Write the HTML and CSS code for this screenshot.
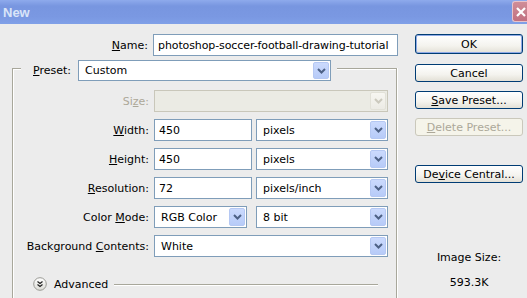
FILE: index.html
```html
<!DOCTYPE html>
<html lang="en">
<head>
  <meta charset="UTF-8" />
  <title>New</title>
  <link rel="stylesheet" href="styles.css">
</head>
<body>
  <div class="window">

    <!-- title bar -->
    <div class="titlebar">
      <span class="title">New</span>
      <span class="close">
        <svg width="10" height="10" viewBox="0 0 10 10"><path d="M1 1 L9 9 M9 1 L1 9" stroke="#fff" stroke-width="2.2" fill="none"/></svg>
      </span>
    </div>

    <div class="dialog">
      <div class="main">
        <div class="name-row">
          <span class="lbl name-lbl"><u>N</u>ame:</span>
          <div class="field name-field">photoshop-soccer-football-drawing-tutorial</div>
        </div>

        <!-- preset group -->
        <div class="group-head">
          <span class="edge-l"></span>
          <span class="head-lbl"><u>P</u>reset:</span>
          <div class="select preset">
            <span class="val">Custom</span>
            <span class="arrow"><svg width="9" height="6" viewBox="0 0 9 6"><path d="M1 1 L4.5 4.5 L8 1" stroke="#4d6185" stroke-width="2" fill="none"/></svg></span>
          </div>
          <span class="edge-r"></span>
        </div>

        <div class="group-body">
          <div class="form-grid">
            <span class="lbl off">Si<u>z</u>e:</span>
            <div class="select off">
              <span class="val"></span>
              <span class="arrow"><svg width="9" height="6" viewBox="0 0 9 6"><path d="M1 1 L4.5 4.5 L8 1" stroke="#cbc9bd" stroke-width="2" fill="none"/></svg></span>
            </div>

            <span class="lbl"><u>W</u>idth:</span>
            <div class="pair">
              <div class="field num">450</div>
              <div class="select unit">
                <span class="val">pixels</span>
                <span class="arrow"><svg width="9" height="6" viewBox="0 0 9 6"><path d="M1 1 L4.5 4.5 L8 1" stroke="#4d6185" stroke-width="2" fill="none"/></svg></span>
              </div>
            </div>

            <span class="lbl"><u>H</u>eight:</span>
            <div class="pair">
              <div class="field num">450</div>
              <div class="select unit">
                <span class="val">pixels</span>
                <span class="arrow"><svg width="9" height="6" viewBox="0 0 9 6"><path d="M1 1 L4.5 4.5 L8 1" stroke="#4d6185" stroke-width="2" fill="none"/></svg></span>
              </div>
            </div>

            <span class="lbl"><u>R</u>esolution:</span>
            <div class="pair">
              <div class="field num">72</div>
              <div class="select unit">
                <span class="val">pixels/inch</span>
                <span class="arrow"><svg width="9" height="6" viewBox="0 0 9 6"><path d="M1 1 L4.5 4.5 L8 1" stroke="#4d6185" stroke-width="2" fill="none"/></svg></span>
              </div>
            </div>

            <span class="lbl">Color <u>M</u>ode:</span>
            <div class="pair">
              <div class="select mode">
                <span class="val">RGB Color</span>
                <span class="arrow"><svg width="9" height="6" viewBox="0 0 9 6"><path d="M1 1 L4.5 4.5 L8 1" stroke="#4d6185" stroke-width="2" fill="none"/></svg></span>
              </div>
              <div class="select unit">
                <span class="val">8 bit</span>
                <span class="arrow"><svg width="9" height="6" viewBox="0 0 9 6"><path d="M1 1 L4.5 4.5 L8 1" stroke="#4d6185" stroke-width="2" fill="none"/></svg></span>
              </div>
            </div>

            <span class="lbl">Background <u>C</u>ontents:</span>
            <div class="select">
              <span class="val">White</span>
              <span class="arrow"><svg width="9" height="6" viewBox="0 0 9 6"><path d="M1 1 L4.5 4.5 L8 1" stroke="#4d6185" stroke-width="2" fill="none"/></svg></span>
            </div>
          </div>

          <div class="advanced">
            <svg class="adv-icon" width="14" height="14" viewBox="0 0 14 14">
              <defs>
                <linearGradient id="advg" x1="0" y1="0" x2="0" y2="1">
                  <stop offset="0" stop-color="#ffffff"/>
                  <stop offset="1" stop-color="#dcdcd6"/>
                </linearGradient>
              </defs>
              <circle cx="7" cy="7" r="6.3" fill="url(#advg)" stroke="#9a9a94" stroke-width="1"/>
              <path d="M4.5 4.5 L7 6.5 L9.5 4.5 M4.5 7.5 L7 9.5 L9.5 7.5" stroke="#222" stroke-width="1.2" fill="none"/>
            </svg>
            <span class="adv-text">Advanced</span>
            <span class="adv-line"></span>
          </div>
        </div>
      </div>

      <!-- buttons -->
      <div class="side">
        <div class="btn default">OK</div>
        <div class="btn">Cancel</div>
        <div class="btn"><u>S</u>ave Preset...</div>
        <div class="btn disabled"><u>D</u>elete Preset...</div>
        <div class="btn far">De<u>v</u>ice Central...</div>
        <div class="size-label">Image Size:</div>
        <div class="size-value">593.3K</div>
      </div>
    </div>
  </div>
</body>
</html>
```

FILE: styles.css
```css
* {
  box-sizing: border-box;
}

html, body {
  margin: 0;
  padding: 0;
  overflow: hidden;
  background: #ececec;
}

body {
  font-family: "DejaVu Sans", Tahoma, sans-serif;
  font-size: 11px;
  color: #000;
}

u {
  text-decoration: underline;
  text-underline-offset: 1px;
}

.window {
  width: 527px;
  height: 298px;
  display: flex;
  flex-direction: column;
}

/* title bar */
.titlebar {
  height: 24px;
  flex: none;
  display: flex;
  justify-content: space-between;
  align-items: center;
  background: linear-gradient(#8eaaec, #7896e0 25%, #7a98e2 70%, #80a0e8);
}

.title {
  font: bold 13px "Liberation Sans", sans-serif;
  color: #d9e4f8;
  padding-left: 3px;
}

.close {
  width: 15px;
  height: 21px;
  align-self: flex-start;
  margin-top: 1px;
  display: flex;
  align-items: center;
  justify-content: center;
  padding-left: 2px;
  background: linear-gradient(#cf8d98, #c17181);
  border: 1px solid #e8c3ca;
  border-right: none;
  border-radius: 3px 0 0 3px;
}

/* body */
.dialog {
  flex: 1;
  display: flex;
  padding-top: 10px;
}

.main {
  width: 400px;
}

.lbl {
  text-align: right;
  white-space: nowrap;
}

.lbl.off {
  color: #aca899;
}

.name-row {
  display: flex;
  align-items: center;
  height: 22px;
}

.name-lbl {
  width: 148px;
  margin-right: 5px;
}

.field {
  height: 22px;
  display: flex;
  align-items: center;
  padding-left: 4px;
  background: #fff;
  border: 1px solid #7f9db9;
  white-space: nowrap;
  overflow: hidden;
}

.name-field {
  width: 245px;
  letter-spacing: -0.1px;
}

.select {
  height: 22px;
  display: flex;
  align-items: center;
  background: #fff;
  border: 1px solid #7f9db9;
  padding: 1px;
}

.select .val {
  flex: 1;
  padding-left: 5px;
  white-space: nowrap;
}

.arrow {
  width: 16px;
  height: 100%;
  display: flex;
  align-items: center;
  justify-content: center;
  background: linear-gradient(#cbdafd, #b7cbf8);
  border: 1px solid #b5c8f3;
  border-radius: 2px;
}

.select.off {
  background: #ebebe4;
  border-color: #c9c7ba;
}

.select.off .arrow {
  background: linear-gradient(#f7f6f1, #ecebe5);
  border-color: #e2e1d8;
}

/* group box */
.group-head {
  display: flex;
  height: 21px;
  margin-top: 4px;
  margin-left: 12px;
  width: 385px;
}

.edge-l {
  width: 9px;
  margin-top: 8px;
  border-top: 1px solid #a8a79b;
  border-left: 1px solid #a8a79b;
  box-shadow: inset 1px 1px 0 #fff;
}

.head-lbl {
  width: 45px;
  margin-left: 12px;
  line-height: 21px;
}

.select.preset {
  width: 253px;
  height: 21px;
}

.edge-r {
  flex: 1;
  margin-left: 6px;
  margin-top: 8px;
  border-top: 1px solid #a8a79b;
  border-right: 1px solid #a8a79b;
  box-shadow: inset 0 1px 0 #fff, 1px 0 0 #fff;
}

.group-body {
  width: 385px;
  height: 220px;
  margin-left: 12px;
  padding-top: 9px;
  border-left: 1px solid #a8a79b;
  border-right: 1px solid #a8a79b;
  box-shadow: inset 1px 0 0 #fff, 1px 0 0 #fff;
}

.form-grid {
  display: grid;
  grid-template-columns: 136px 234px;
  grid-auto-rows: 22px;
  column-gap: 5px;
  row-gap: 7px;
  align-items: center;
}

.pair {
  display: flex;
  justify-content: space-between;
}

.field.num {
  width: 98px;
}

.select.unit {
  width: 132px;
}

.select.mode {
  width: 93px;
}

.advanced {
  display: flex;
  align-items: center;
  height: 14px;
  margin-top: 20px;
  padding-left: 20px;
}

.adv-text {
  margin-left: 7px;
}

.adv-line {
  flex: 1;
  margin-left: 6px;
  margin-right: 18px;
  border-top: 1px solid #a8a79b;
  box-shadow: 0 1px 0 #fff;
}

/* buttons */
.side {
  width: 108px;
  margin-left: 15px;
  display: flex;
  flex-direction: column;
}

.btn {
  height: 18px;
  display: flex;
  align-items: center;
  justify-content: center;
  background: linear-gradient(#ffffff, #f4f3ee 60%, #e3e0d6);
  border: 1px solid #003c74;
  border-radius: 3px;
  margin-top: 9px;
  white-space: nowrap;
}

.btn.default {
  height: 20px;
  margin-top: 0;
  margin-bottom: 1px;
  box-shadow: inset 0 0 0 1px #8faae6;
}

.btn.disabled {
  color: #aca899;
  border-color: #cac8bb;
  background: #f5f4ea;
}

.btn.far {
  margin-top: 29px;
}

.size-label {
  text-align: center;
  margin-top: 68px;
}

.size-value {
  text-align: center;
  margin-top: 12px;
}
```
